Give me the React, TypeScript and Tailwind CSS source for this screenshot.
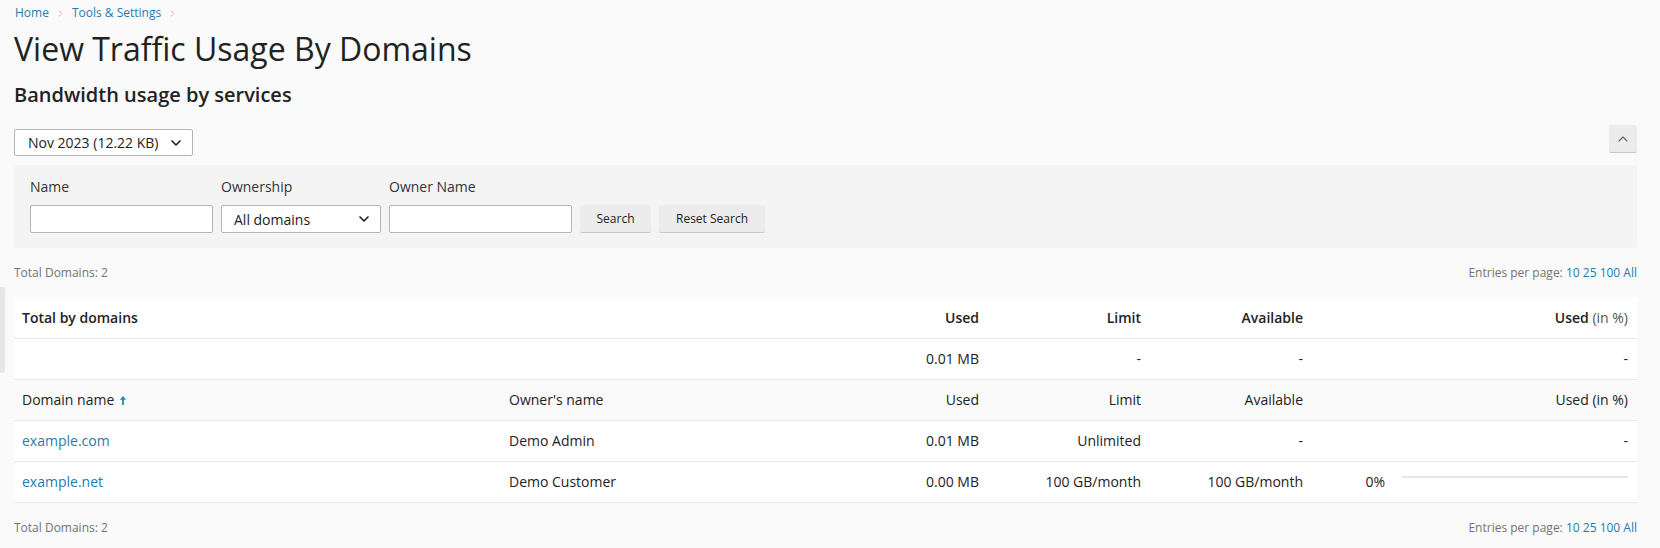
import { ChevronDown, ChevronUp, ChevronRight } from 'lucide-react';

const font = { fontFamily: '"Open Sans", "Liberation Sans", sans-serif' };

function EntriesPerPage() {
  return (
    <div className="text-[12px] text-[#737373]">
      Entries per page:{' '}
      <span className="text-[#1f7bb3]">10</span>{' '}
      <span className="text-[#1f7bb3]">25</span>{' '}
      <span className="text-[#1f7bb3]">100</span>{' '}
      <span className="text-[#1f7bb3]">All</span>
    </div>
  );
}

function SortArrow() {
  return (
    <svg width="8" height="11" viewBox="0 0 8 11" className="inline-block ml-[5px] -mt-[2px]">
      <path d="M4 1 L0.8 4.8 H3.1 V10 H4.9 V4.8 H7.2 Z" fill="#2a86ba" />
    </svg>
  );
}

export default function App() {
  const rows = [
    { domain: 'example.com', owner: 'Demo Admin', used: '0.01 MB', limit: 'Unlimited', available: '-', pct: null },
    { domain: 'example.net', owner: 'Demo Customer', used: '0.00 MB', limit: '100 GB/month', available: '100 GB/month', pct: '0%' },
  ];

  return (
    <div className="relative min-h-[548px] bg-[#fafafa] text-[#222] pl-[14px] pr-[23px]" style={font}>
      {/* side handle */}
      <div className="absolute left-0 top-[287px] w-[5px] h-[86px] bg-[#e6e6e6] rounded-r-[2px]" />

      {/* breadcrumbs */}
      <div className="h-[26px] flex items-center text-[12px] text-[#1f7bb3] pl-[1px]">
        <span>Home</span>
        <ChevronRight size={11} strokeWidth={1.5} className="text-[#999] mx-[6px]" />
        <span>Tools &amp; Settings</span>
        <ChevronRight size={11} strokeWidth={1.5} className="text-[#999] mx-[6px]" />
      </div>

      <h1 className="mt-[3px] text-[32px] leading-[40px] font-normal text-[#222]">View Traffic Usage By Domains</h1>
      <h2 className="mt-[12px] text-[20px] leading-[28px] font-semibold text-[#222]">Bandwidth usage by services</h2>

      <div className="mt-[20px] flex items-start justify-between">
        <div className="w-[179px] h-[27px] bg-white border border-[#b5b5b5] rounded-[2px] flex items-center justify-between pl-[13px] pr-[8px] text-[14px]">
          <span>Nov 2023 (12.22 KB)</span>
          <ChevronDown size={16} strokeWidth={2.5} className="text-[#222]" />
        </div>
        <div className="mt-[-4px] w-[28px] h-[28px] bg-[#ececec] border-b border-[#c8c8c8] rounded-[2px] flex items-center justify-center">
          <ChevronUp size={16} strokeWidth={1.6} className="text-[#666]" />
        </div>
      </div>

      {/* filter panel */}
      <div className="mt-[9px] h-[83px] bg-[#f4f4f4] rounded-[2px] px-[16px] pt-[12px] flex items-start gap-[8px] text-[14px]">
        <div className="flex flex-col gap-[8px]">
          <label className="h-[20px] leading-[20px] text-[#333]">Name</label>
          <div className="w-[183px] h-[28px] bg-white border border-[#b5b5b5] rounded-[2px]" />
        </div>
        <div className="flex flex-col gap-[8px]">
          <label className="h-[20px] leading-[20px] text-[#333]">Ownership</label>
          <div className="w-[160px] h-[28px] bg-white border border-[#b5b5b5] rounded-[2px] flex items-center justify-between pl-[12px] pr-[8px]">
            <span>All domains</span>
            <ChevronDown size={16} strokeWidth={2.5} className="text-[#222]" />
          </div>
        </div>
        <div className="flex flex-col gap-[8px]">
          <label className="h-[20px] leading-[20px] text-[#333]">Owner Name</label>
          <div className="w-[183px] h-[28px] bg-white border border-[#b5b5b5] rounded-[2px]" />
        </div>
        <div className="flex gap-[8px] mt-[28px]">
          <button className="w-[71px] h-[28px] bg-[#ececec] border-b border-[#c8c8c8] rounded-[2px] text-[12px] text-[#222]">Search</button>
          <button className="w-[106px] h-[28px] bg-[#ececec] border-b border-[#c8c8c8] rounded-[2px] text-[12px] text-[#222]">Reset Search</button>
        </div>
      </div>

      <div className="h-[49px] flex items-center justify-between">
        <div className="text-[12px] text-[#737373]">Total Domains: 2</div>
        <EntriesPerPage />
      </div>

      {/* table */}
      <table className="w-full table-fixed border-collapse text-[14px]">
        <colgroup>
          <col className="w-[487px]" />
          <col className="w-[317px]" />
          <col className="w-[169px]" />
          <col className="w-[162px]" />
          <col className="w-[162px]" />
          <col className="w-[83px]" />
          <col />
        </colgroup>
        <tbody>
          <tr className="bg-white h-[41px] border-b border-[#e8e8e8] font-semibold">
            <td className="px-[8px]">Total by domains</td>
            <td />
            <td className="px-[8px] text-right">Used</td>
            <td className="px-[8px] text-right">Limit</td>
            <td className="px-[8px] text-right">Available</td>
            <td colSpan={2} className="pl-[8px] pr-[9px] text-right">
              Used <span className="font-normal text-[#555]">(in %)</span>
            </td>
          </tr>
          <tr className="bg-white h-[41px] border-b border-[#e8e8e8]">
            <td />
            <td />
            <td className="px-[8px] text-right">0.01 MB</td>
            <td className="px-[8px] text-right">-</td>
            <td className="px-[8px] text-right">-</td>
            <td colSpan={2} className="pl-[8px] pr-[9px] text-right">-</td>
          </tr>
          <tr className="h-[41px] border-b border-[#e8e8e8]">
            <td className="px-[8px]">
              Domain name
              <SortArrow />
            </td>
            <td className="px-[8px]">Owner's name</td>
            <td className="px-[8px] text-right">Used</td>
            <td className="px-[8px] text-right">Limit</td>
            <td className="px-[8px] text-right">Available</td>
            <td colSpan={2} className="pl-[8px] pr-[9px] text-right">Used (in %)</td>
          </tr>
          {rows.map((r) => (
            <tr key={r.domain} className="bg-white h-[41px] border-b border-[#e8e8e8]">
              <td className="px-[8px] text-[#1f7bb3]">{r.domain}</td>
              <td className="px-[8px]">{r.owner}</td>
              <td className="px-[8px] text-right">{r.used}</td>
              <td className="px-[8px] text-right">{r.limit}</td>
              <td className="px-[8px] text-right">{r.available}</td>
              {r.pct ? (
                <>
                  <td className="pl-[8px] pr-[9px] text-right">{r.pct}</td>
                  <td className="pl-[8px] pr-[9px]">
                    <div className="h-[2px] bg-[#e6e6e6] -mt-[6px]" />
                  </td>
                </>
              ) : (
                <td colSpan={2} className="pl-[8px] pr-[9px] text-right">-</td>
              )}
            </tr>
          ))}
        </tbody>
      </table>

      <div className="h-[50px] flex items-center justify-between">
        <div className="text-[12px] text-[#737373]">Total Domains: 2</div>
        <EntriesPerPage />
      </div>
    </div>
  );
}
